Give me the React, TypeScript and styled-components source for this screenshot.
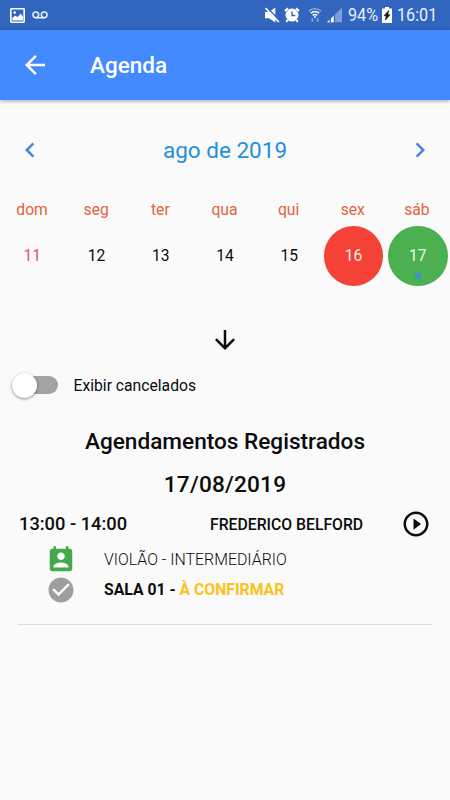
import React from "react";
import styled, { createGlobalStyle } from "styled-components";

const GlobalStyle = createGlobalStyle`
  * { box-sizing: border-box; }
  body { margin: 0; background: #fafafa; }
`;

const Screen = styled.div`
  display: flex;
  flex-direction: column;
  width: 450px;
  height: 800px;
  overflow: hidden;
  background: #fafafa;
  color: #0c0c0c;
  font-family: Roboto, "Liberation Sans", sans-serif;
`;

const StatusBar = styled.div`
  display: flex;
  align-items: center;
  flex: none;
  height: 30px;
  padding-left: 10px;
  background: #3165be;
  color: #fff;
`;

const StatusIcon = styled.svg<{ $gap?: number }>`
  flex: none;
  display: block;
  margin-left: ${(p) => p.$gap ?? 0}px;
`;

const StatusText = styled.span<{ $width: number; $gap: number }>`
  flex: none;
  width: ${(p) => p.$width}px;
  margin-left: ${(p) => p.$gap}px;
  font-size: 18.6px;
  line-height: 31px;
  white-space: nowrap;
  color: #e9f1ff;
  transform: scaleX(0.87);
  transform-origin: left center;
`;

const Spacer = styled.div`
  flex: 1;
`;

const AppBar = styled.header`
  display: flex;
  align-items: center;
  flex: none;
  height: 70px;
  padding-left: 20px;
  background: #448aff;
  color: #fff;
  box-shadow: 0 1px 4px rgba(0, 0, 0, 0.35);
`;

const Title = styled.h1`
  margin: 0 0 0 40px;
  font-size: 22.5px;
  font-weight: 500;
  line-height: 30px;
`;

const Icon = styled.svg<{ $color?: string }>`
  display: block;
  flex: none;
  fill: ${(p) => p.$color ?? "currentColor"};
`;

const MonthRow = styled.div`
  display: flex;
  align-items: center;
  justify-content: space-between;
  flex: none;
  height: 60px;
  margin-top: 20px;
  padding: 0 15px;
`;

const MonthName = styled.div`
  font-size: 22.5px;
  color: #2390dc;
`;

const Weekdays = styled.div`
  display: grid;
  grid-template-columns: repeat(7, 1fr);
  flex: none;
  height: 20px;
  margin-top: 20px;
  margin-right: 1px;
`;

const Weekday = styled.span`
  text-align: center;
  font-size: 15.7px;
  line-height: 20px;
  color: #e2643a;
`;

const Days = styled.div`
  display: grid;
  grid-template-columns: repeat(7, 1fr);
  justify-items: center;
  flex: none;
  height: 60px;
  margin-top: 6px;
`;

const Day = styled.div<{ $bg?: string; $color?: string }>`
  position: relative;
  width: 59.5px;
  height: 59.5px;
  border-radius: 50%;
  text-align: center;
  font-size: 15.6px;
  line-height: 60px;
  background: ${(p) => p.$bg ?? "transparent"};
  color: ${(p) => p.$color ?? "#0c0c0c"};
`;

const EventDot = styled.span`
  position: absolute;
  left: 27px;
  bottom: 7px;
  width: 6px;
  height: 6px;
  border-radius: 50%;
  background: #3b8fd8;
`;

const Expand = styled.div`
  display: flex;
  justify-content: center;
  flex: none;
  margin-top: 39px;
`;

const SwitchRow = styled.div`
  display: flex;
  align-items: center;
  flex: none;
  height: 30px;
  margin-top: 15px;
  padding-left: 12px;
`;

const Track = styled.div`
  display: flex;
  align-items: center;
  width: 46px;
  height: 18px;
  border-radius: 9px;
  background: linear-gradient(90deg, transparent 10px, #a3a3a3 10px);
`;

const Thumb = styled.div`
  width: 25px;
  height: 25px;
  border-radius: 50%;
  background: #fff;
  box-shadow: 0 1px 3px rgba(0, 0, 0, 0.45);
`;

const SwitchLabel = styled.span`
  margin-left: 15.5px;
  font-size: 15.7px;
`;

const Heading = styled.h2<{ $top: number; $tracking?: number }>`
  flex: none;
  margin: ${(p) => p.$top}px 0 0;
  text-align: center;
  font-size: 22.6px;
  font-weight: 500;
  line-height: 30px;
  letter-spacing: ${(p) => p.$tracking ?? 0}px;
`;

const Booking = styled.section`
  flex: none;
  margin: 9px 18px 0;
  border-bottom: 1px solid #dcdcdc;
  height: 116px;
`;

const BookingHeader = styled.div`
  display: flex;
  align-items: center;
  height: 30px;
`;

const Time = styled.span`
  width: 192px;
  padding-left: 1px;
  padding-bottom: 1px;
  font-size: 18.3px;
  font-weight: 500;
`;

const Person = styled.span`
  width: 191px;
  font-size: 15.75px;
  font-weight: 500;
`;

const Detail = styled.div<{ $top: number; $bold?: boolean }>`
  display: flex;
  align-items: center;
  height: 30px;
  margin-top: ${(p) => p.$top}px;
  padding-left: 28px;
  font-size: ${(p) => (p.$bold ? 15.75 : 15.9)}px;
  font-weight: ${(p) => (p.$bold ? 700 : 300)};
  line-height: 20px;
  gap: 28px;
`;

const Pending = styled.span`
  color: #fcc21b;
`;

const CHEVRON_LEFT = "M15.41 7.41 14 6l-6 6 6 6 1.41-1.41L10.83 12z";
const CHEVRON_RIGHT = "M10 6 8.59 7.41 13.17 12l-4.58 4.59L10 18l6-6z";

function Glyph({ d, color, size = 30 }: { d: string; color?: string; size?: number }) {
  return (
    <Icon $color={color} width={size} height={size} viewBox="0 0 24 24">
      <path d={d} />
    </Icon>
  );
}

const week = ["dom", "seg", "ter", "qua", "qui", "sex", "sáb"];
const days = [
  { n: 11, color: "#e0489a" },
  { n: 12 },
  { n: 13 },
  { n: 14 },
  { n: 15 },
  { n: 16, color: "#fdeceb", bg: "#f44336" },
  { n: 17, color: "#edf8ed", bg: "#4caf50", dot: true },
];

export default function App() {
  return (
    <Screen>
      <GlobalStyle />
      <StatusBar>
        <StatusIcon width="15" height="15" viewBox="0 0 15 15">
          <rect x=".8" y=".8" width="13.4" height="13.4" rx=".6" fill="none" stroke="#fff" strokeWidth="1.6" />
          <path d="M2.3 12.5V9.8l3-2 2.2 1.3 3.2-3.3 2.2 2.5v4.2z" fill="#fff" />
          <circle cx="4.7" cy="4.6" r="1.3" fill="#fff" />
        </StatusIcon>
        <StatusIcon $gap={7} width="16" height="8" viewBox="0 0 16 8" fill="none" stroke="#e6eefc" strokeWidth="1.5">
          <circle cx="3.8" cy="3.8" r="2.9" />
          <circle cx="12.2" cy="3.8" r="2.9" />
          <path d="M3.8 6.8h8.4" />
        </StatusIcon>
        <Spacer />
        <StatusIcon width="15" height="17" viewBox="0 0 15 17">
          <path d="M0 5h4l6.3-4.6v15.2L4 11.3H0z" fill="#fff" />
          <path d="M1.8.2 14.8 13.8" stroke="#3165be" strokeWidth="1.5" />
          <path d="M.5 1 13.8 15" stroke="#fff" strokeWidth="1.7" />
        </StatusIcon>
        <StatusIcon $gap={4} width="16" height="16" viewBox="0 0 16 16">
          <path d="M.9 4 4 1.2M15.1 4 12 1.2M3.6 13l-1.4 1.8M12.4 13l1.4 1.8" stroke="#fff" strokeWidth="2" />
          <circle cx="8" cy="8.1" r="6.5" fill="#fff" />
          <path d="M8 4.4v4.1h3.3" fill="none" stroke="#3165be" strokeWidth="1.4" />
        </StatusIcon>
        <StatusIcon $gap={8} width="14" height="16" viewBox="0 0 14 16" fill="none">
          <path d="M.8 4.2C4.5.7 9.5.7 13.2 4.2" stroke="#92afe0" strokeWidth="1.3" />
          <path d="M2.7 6.3c2.6-2.3 6-2.3 8.6 0M4.6 8.4c1.5-1.2 3.3-1.2 4.8 0" stroke="#fff" strokeWidth="1.4" />
          <circle cx="7" cy="9.9" r="1" fill="#fff" />
          <path d="m2.4 12.9 1.9-2.2 1.9 2.2H5v2.2H3.6v-2.2zM7.8 12.9l1.9 2.2 1.9-2.2h-1.2v-2.2H9v2.2z" fill="#7c9fdb" />
        </StatusIcon>
        <StatusIcon $gap={5} width="16" height="16" viewBox="0 0 16 16">
          <path d="M0 15.3 15 .7v14.6z" fill="#7c9edb" />
          <path d="M0 15.3 7 8.5v6.8z" fill="#fff" />
          <path d="M3.2 10.5v4.8M7.4 7v8.3" stroke="#3165be" strokeWidth="1.3" />
        </StatusIcon>
        <StatusText $width={30} $gap={5}>94%</StatusText>
        <StatusIcon $gap={4} width="10" height="16" viewBox="0 0 10 16">
          <path d="M3 0h4v1.5h3V16H0V1.5h3z" fill="#fff" />
          <path d="M6.8 3.4 2 8.8h2.3l-.9 4.4L8 7.7H5.6z" fill="#111" stroke="#111" strokeWidth=".6" />
        </StatusIcon>
        <StatusText $width={53} $gap={5}>16:01</StatusText>
      </StatusBar>

      <AppBar>
        <Glyph d="M20 11H7.83l5.59-5.59L12 4l-8 8 8 8 1.41-1.41L7.83 13H20z" />
        <Title>Agenda</Title>
      </AppBar>

      <MonthRow>
        <Glyph d={CHEVRON_LEFT} color="#4a83e0" />
        <MonthName>ago de 2019</MonthName>
        <Glyph d={CHEVRON_RIGHT} color="#4a83e0" />
      </MonthRow>
      <Weekdays>
        {week.map((name) => (
          <Weekday key={name}>{name}</Weekday>
        ))}
      </Weekdays>
      <Days>
        {days.map((day) => (
          <Day key={day.n} $bg={day.bg} $color={day.color}>
            {day.n}
            {day.dot && <EventDot />}
          </Day>
        ))}
      </Days>

      <Expand>
        <Glyph d="m20 12-1.41-1.41L13 16.17V4h-2v12.17l-5.58-5.59L4 12l8 8z" />
      </Expand>
      <SwitchRow>
        <Track>
          <Thumb />
        </Track>
        <SwitchLabel>Exibir cancelados</SwitchLabel>
      </SwitchRow>

      <Heading $top={27}>Agendamentos Registrados</Heading>
      <Heading $top={13} $tracking={0.2}>17/08/2019</Heading>

      <Booking>
        <BookingHeader>
          <Time>13:00 - 14:00</Time>
          <Person>FREDERICO BELFORD</Person>
          <Glyph d="m10 16.5 6-4.5-6-4.5zM12 2C6.48 2 2 6.48 2 12s4.48 10 10 10 10-4.48 10-10S17.52 2 12 2m0 18c-4.41 0-8-3.59-8-8s3.59-8 8-8 8 3.59 8 8-3.59 8-8 8" />
        </BookingHeader>
        <Detail $top={6}>
          <Glyph
            color="#43a94b"
            d="M19 3h-1V1h-2v2H8V1H6v2H5c-1.11 0-2 .9-2 2v14c0 1.1.89 2 2 2h14c1.1 0 2-.9 2-2V5c0-1.1-.9-2-2-2m-7 3c1.66 0 3 1.34 3 3s-1.34 3-3 3-3-1.34-3-3 1.34-3 3-3m6 12H6v-1c0-2 4-3.1 6-3.1s6 1.1 6 3.1z"
          />
          VIOLÃO - INTERMEDIÁRIO
        </Detail>
        <Detail $top={0} $bold>
          <Glyph
            color="#9e9e9e"
            d="M12 2C6.48 2 2 6.48 2 12s4.48 10 10 10 10-4.48 10-10S17.52 2 12 2m-2 15-5-5 1.41-1.41L10 14.17l7.59-7.59L19 8z"
          />
          <span>
            SALA 01 - <Pending>À CONFIRMAR</Pending>
          </span>
        </Detail>
      </Booking>
    </Screen>
  );
}
